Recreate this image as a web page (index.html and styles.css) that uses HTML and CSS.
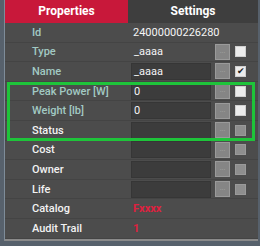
FILE: index.html
```html
<!DOCTYPE html>
<html lang="en">
<head>
    <meta charset="UTF-8">
    <title>Properties</title>
    <link rel="stylesheet" href="styles.css">
</head>
<body>
<div class="panel">
    <div class="tabs">
        <div class="tab active">Properties</div>
        <div class="tab">Settings</div>
    </div>
    <div class="rows">
        <div class="row">
            <div class="label teal">Id</div>
            <div class="value plain">24000000226280</div>
        </div>
        <div class="row">
            <div class="label teal">Type</div>
            <div class="value">
                <div class="field bare">_aaaa</div>
                <div class="btn">...</div>
                <div class="check"></div>
            </div>
        </div>
        <div class="row">
            <div class="label teal">Name</div>
            <div class="value">
                <div class="field">_aaaa</div>
                <div class="btn">...</div>
                <div class="check on">&#10004;</div>
            </div>
        </div>
        <div class="group">
            <div class="row">
                <div class="label teal">Peak Power [W]</div>
                <div class="value">
                    <div class="field">0</div>
                    <div class="btn">...</div>
                    <div class="check"></div>
                </div>
            </div>
            <div class="row">
                <div class="label teal">Weight [lb]</div>
                <div class="value">
                    <div class="field">0</div>
                    <div class="btn">...</div>
                    <div class="check"></div>
                </div>
            </div>
            <div class="row">
                <div class="label">Status</div>
                <div class="value">
                    <div class="field"></div>
                    <div class="btn">...</div>
                    <div class="check off"></div>
                </div>
            </div>
        </div>
        <div class="row">
            <div class="label">Cost</div>
            <div class="value">
                <div class="field"></div>
                <div class="btn">...</div>
                <div class="check off"></div>
            </div>
        </div>
        <div class="row">
            <div class="label">Owner</div>
            <div class="value">
                <div class="field"></div>
                <div class="btn">...</div>
                <div class="check off"></div>
            </div>
        </div>
        <div class="row">
            <div class="label">Life</div>
            <div class="value">
                <div class="field"></div>
                <div class="btn">...</div>
                <div class="check off"></div>
            </div>
        </div>
        <div class="row">
            <div class="label">Catalog</div>
            <div class="value plain red">Fxxxx</div>
        </div>
        <div class="row">
            <div class="label">Audit Trail</div>
            <div class="value plain red">1</div>
        </div>
    </div>
</div>
</body>
</html>
```
FILE: styles.css
```css
*{
    padding: 0;
    margin: 0;
    box-sizing: border-box;
}
body{
    background-color: #57616c;
    font-family: Roboto, "Liberation Sans", sans-serif;
    width: 260px;
    height: 246px;
    overflow: hidden;
}
.panel{
    margin-left: 4px;
    width: 254px;
    border-left: 1px solid #7e8c99;
    background-color: #4c4c4c;
    border-bottom: 2px solid #8a8a8a;
}
.tabs{
    display: flex;
    height: 23px;
    background-color: #3e3e3e;
}
.tab{
    flex: 1;
    color: #ffffff;
    font-size: 12px;
    font-weight: 700;
    line-height: 23px;
    text-align: center;
}
.tab.active{
    flex: 0 0 123px;
    background-color: #c8183a;
}
.row{
    display: grid;
    grid-template-columns: 123px 1fr;
    height: 19.6px;
    border-bottom: 1px solid #444444;
    align-items: center;
}
.label{
    padding-left: 27px;
    color: #f2f2f2;
    font-size: 11px;
    font-weight: 500;
}
.label.teal{
    color: #a2c9c3;
}
.value{
    display: flex;
    align-items: center;
    padding-left: 3px;
    height: 100%;
    color: #f5f5f5;
    font-size: 11px;
}
.value.plain{
    padding-left: 5px;
}
.value.red{
    color: #e0203f;
    font-weight: 700;
}
.field{
    width: 80px;
    height: 17px;
    background-color: #3c3c3c;
    border: 1px solid #363636;
    line-height: 15px;
    padding-left: 2px;
}
.field.bare{
    background-color: transparent;
    border-color: transparent;
}
.btn{
    width: 15px;
    height: 16px;
    margin-left: 4px;
    background-color: #858585;
    border: 1px solid #9a9a9a;
    color: #a8a8a8;
    font-size: 7px;
    line-height: 12px;
    text-align: center;
}
.check{
    width: 11px;
    height: 11px;
    margin-left: 5px;
    background-color: #ececec;
    border: 1px solid #cfcfcf;
    color: #222222;
    font-size: 9px;
    line-height: 9px;
    text-align: center;
}
.check.off{
    background-color: #8e8e8e;
    border-color: #9a9a9a;
}
.group{
    position: relative;
}
.group::after{
    content: "";
    position: absolute;
    left: 2px;
    right: 3px;
    top: 0;
    bottom: 0;
    border: 3px solid #1ec43a;
}
```
